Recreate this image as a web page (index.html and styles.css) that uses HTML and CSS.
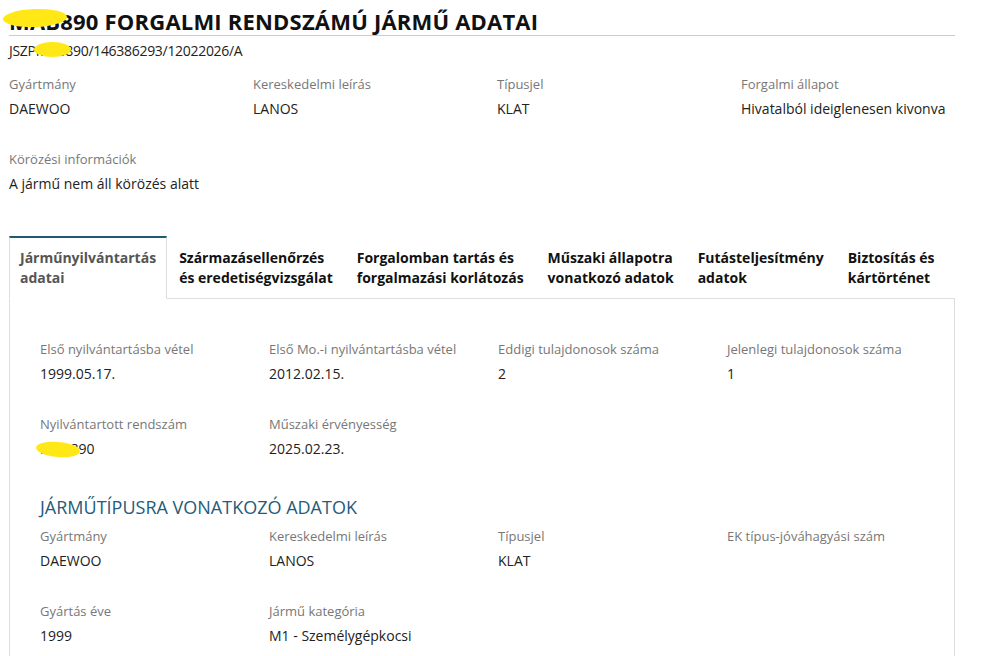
FILE: index.html
```html
<!DOCTYPE html>
<html lang="hu">
<head>
  <meta charset="UTF-8">
  <meta name="viewport" content="width=device-width, initial-scale=1.0">
  <title>Jármű adatai</title>
  <link rel="stylesheet" href="styles.css">
</head>
<body>

  <div class="page">
    <h1 class="title"><span class="redact redact-title">MAB8</span>90 FORGALMI RENDSZÁMÚ JÁRMŰ ADATAI</h1>
    <p class="doc-number">JSZP<span class="redact redact-doc">MAB8</span>90/146386293/12022026/A</p>

    <div class="fields">
      <div class="field">
        <div class="label">Gyártmány</div>
        <div class="value">DAEWOO</div>
      </div>
      <div class="field">
        <div class="label">Kereskedelmi leírás</div>
        <div class="value">LANOS</div>
      </div>
      <div class="field">
        <div class="label">Típusjel</div>
        <div class="value">KLAT</div>
      </div>
      <div class="field">
        <div class="label">Forgalmi állapot</div>
        <div class="value">Hivatalból ideiglenesen kivonva</div>
      </div>
      <div class="field">
        <div class="label">Körözési információk</div>
        <div class="value">A jármű nem áll körözés alatt</div>
      </div>
    </div>

    <!-- tabs -->
    <div class="tabs">
      <div class="tab active">Járműnyilvántartás<br>adatai</div>
      <div class="tab">Származásellenőrzés<br>és eredetiségvizsgálat</div>
      <div class="tab">Forgalomban tartás és<br>forgalmazási korlátozás</div>
      <div class="tab">Műszaki állapotra<br>vonatkozó adatok</div>
      <div class="tab">Futásteljesítmény<br>adatok</div>
      <div class="tab">Biztosítás és<br>kártörténet</div>
    </div>

    <div class="panel">
      <div class="fields panel-fields">
        <div class="field">
          <div class="label">Első nyilvántartásba vétel</div>
          <div class="value">1999.05.17.</div>
        </div>
        <div class="field">
          <div class="label">Első Mo.-i nyilvántartásba vétel</div>
          <div class="value">2012.02.15.</div>
        </div>
        <div class="field">
          <div class="label">Eddigi tulajdonosok száma</div>
          <div class="value">2</div>
        </div>
        <div class="field">
          <div class="label">Jelenlegi tulajdonosok száma</div>
          <div class="value">1</div>
        </div>
        <div class="field">
          <div class="label">Nyilvántartott rendszám</div>
          <div class="value"><span class="redact redact-plate">MAB8</span>90</div>
        </div>
        <div class="field">
          <div class="label">Műszaki érvényesség</div>
          <div class="value">2025.02.23.</div>
        </div>
      </div>

      <h2 class="section-title">JÁRMŰTÍPUSRA VONATKOZÓ ADATOK</h2>

      <div class="fields panel-fields">
        <div class="field">
          <div class="label">Gyártmány</div>
          <div class="value">DAEWOO</div>
        </div>
        <div class="field">
          <div class="label">Kereskedelmi leírás</div>
          <div class="value">LANOS</div>
        </div>
        <div class="field">
          <div class="label">Típusjel</div>
          <div class="value">KLAT</div>
        </div>
        <div class="field">
          <div class="label">EK típus-jóváhagyási szám</div>
          <div class="value"></div>
        </div>
        <div class="field">
          <div class="label">Gyártás éve</div>
          <div class="value">1999</div>
        </div>
        <div class="field">
          <div class="label">Jármű kategória</div>
          <div class="value">M1 - Személygépkocsi</div>
        </div>
      </div>
    </div>
  </div>

</body>
</html>
```

FILE: styles.css
```css
*{
margin: 0;
padding: 0;
box-sizing: border-box;
font-family: 'Open Sans', sans-serif;
}

body{
background: #fff;
color: #222;
}

.page{
padding-left: 9px;
}

.title{
width: 946px;
font-size: 22px;
line-height: 28px;
font-weight: 700;
letter-spacing: 0.2px;
color: #111;
padding-top: 7px;
border-bottom: 1px solid #ccc;
}

.doc-number{
font-size: 14px;
line-height: 20px;
letter-spacing: -0.3px;
margin-top: 5px;
}

.fields{
display: grid;
grid-template-columns: repeat(4, 244px);
margin-top: 14px;
}

.field{
margin-bottom: 31px;
}

.label{
font-size: 13px;
line-height: 18px;
color: #777;
}

.value{
font-size: 14px;
line-height: 20px;
min-height: 20px;
margin-top: 6px;
}

/* tabs */
.tabs{
display: flex;
width: 946px;
margin-top: 11px;
}

.tab{
font-size: 14px;
line-height: 20px;
font-weight: 700;
color: #111;
white-space: nowrap;
padding: 10px 11px 9px;
border: 1px solid transparent;
border-top: 2px solid transparent;
}

.tab.active{
position: relative;
padding-left: 10px;
padding-right: 10px;
color: #555;
background: #fff;
border-color: #ddd;
border-top-color: #1f5b70;
border-bottom-color: #fff;
margin-bottom: -1px;
}

.panel{
width: 946px;
min-height: 400px;
border: 1px solid #ddd;
padding: 41px 0 0 30px;
}

.panel-fields{
grid-template-columns: repeat(4, 229px);
margin-top: 0;
}

.section-title{
font-size: 18px;
line-height: 24px;
font-weight: 400;
color: #245c7a;
margin: 5px 0 8px;
}

/* yellow marker over the plate number */
.redact{
position: relative;
}

.redact::after{
content: "";
position: absolute;
background: #ffe816;
border-radius: 50%;
}

.redact-title::after{
left: -6px;
right: 6px;
top: 3px;
height: 18px;
transform: rotate(-2deg);
}

.redact-doc::after{
left: -2px;
right: 2px;
top: 1px;
height: 15px;
}

.redact-plate::after{
left: -4px;
width: 44px;
top: 3px;
height: 15px;
transform: rotate(5deg);
}
```
